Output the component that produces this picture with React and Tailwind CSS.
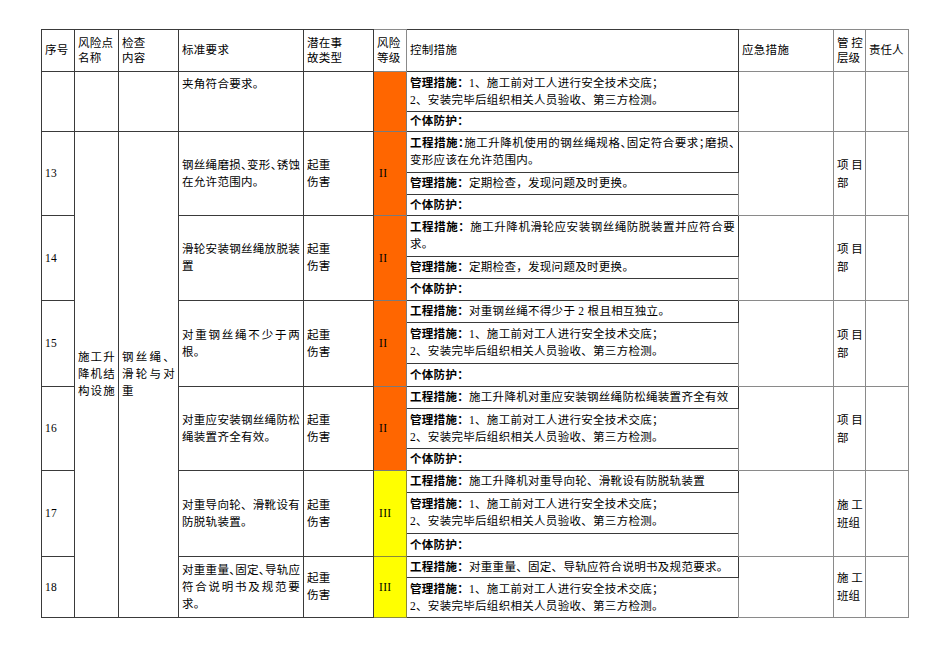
import clsx from 'clsx';

const MGMT = [
  { label: '管理措施：', text: '1、施工前对工人进行安全技术交底；' },
  { text: '2、安装完毕后组织相关人员验收、第三方检测。' },
];

const ROWS = [
  {
    no: '',
    std: [{ t: '夹角符合要求。' }],
    stdTop: true,
    hazard: false,
    level: '',
    color: 'orange',
    owner: null,
    ctrl: [
      { h: 40, lines: MGMT },
      { h: 20, lines: [{ label: '个体防护：' }] },
    ],
  },
  {
    no: '13',
    std: [{ t: '钢丝绳磨损、变形、锈蚀', j: true, halt: true }, { t: '在允许范围内。' }],
    hazard: true,
    level: 'II',
    color: 'orange',
    owner: ['项 目', '部'],
    ctrl: [
      {
        h: 41,
        lines: [
          { label: '工程措施：', text: '施工升降机使用的钢丝绳规格、固定符合要求；磨损、', j: true, halt: true },
          { text: '变形应该在允许范围内。' },
        ],
      },
      { h: 22, lines: [{ label: '管理措施：', text: '定期检查，发现问题及时更换。' }] },
      { h: 21, lines: [{ label: '个体防护：' }] },
    ],
  },
  {
    no: '14',
    std: [{ t: '滑轮安装钢丝绳放脱装', j: true }, { t: '置' }],
    hazard: true,
    level: 'II',
    color: 'orange',
    owner: ['项 目', '部'],
    ctrl: [
      {
        h: 41,
        lines: [
          { label: '工程措施：', text: '施工升降机滑轮应安装钢丝绳防脱装置并应符合要', j: true },
          { text: '求。' },
        ],
      },
      { h: 22, lines: [{ label: '管理措施：', text: '定期检查，发现问题及时更换。' }] },
      { h: 22, lines: [{ label: '个体防护：' }] },
    ],
  },
  {
    no: '15',
    std: [{ t: '对重钢丝绳不少于两', j: true }, { t: '根。' }],
    hazard: true,
    level: 'II',
    color: 'orange',
    owner: ['项 目', '部'],
    ctrl: [
      { h: 22, lines: [{ label: '工程措施：', text: '对重钢丝绳不得少于 2 根且相互独立。' }] },
      { h: 41, lines: MGMT },
      { h: 23, lines: [{ label: '个体防护：' }] },
    ],
  },
  {
    no: '16',
    std: [{ t: '对重应安装钢丝绳防松', j: true }, { t: '绳装置齐全有效。' }],
    hazard: true,
    level: 'II',
    color: 'orange',
    owner: ['项 目', '部'],
    ctrl: [
      { h: 22, lines: [{ label: '工程措施：', text: '施工升降机对重应安装钢丝绳防松绳装置齐全有效' }] },
      { h: 40, lines: MGMT },
      { h: 22, lines: [{ label: '个体防护：' }] },
    ],
  },
  {
    no: '17',
    std: [{ t: '对重导向轮、滑靴设有', j: true }, { t: '防脱轨装置。' }],
    hazard: true,
    level: 'III',
    color: 'yellow',
    owner: ['施 工', '班组'],
    ctrl: [
      { h: 22, lines: [{ label: '工程措施：', text: '施工升降机对重导向轮、滑靴设有防脱轨装置' }] },
      { h: 41, lines: MGMT },
      { h: 23, lines: [{ label: '个体防护：' }] },
    ],
  },
  {
    no: '18',
    std: [
      { t: '对重重量、固定、导轨应', j: true, halt: true },
      { t: '符合说明书及规范要', j: true },
      { t: '求。' },
    ],
    hazard: true,
    level: 'III',
    color: 'yellow',
    owner: ['施 工', '班组'],
    ctrl: [
      { h: 21, lines: [{ label: '工程措施：', text: '对重重量、固定、导轨应符合说明书及规范要求。' }] },
      { h: 40, lines: MGMT },
    ],
  },
];

const COLS = [33, 44, 60, 125, 70, 33, 332, 95, 32, 43];

const Line = ({ line }) => (
  <div
    className={clsx(
      'whitespace-nowrap',
      line.j && '[text-align-last:justify]',
      line.halt && "[font-feature-settings:'halt']"
    )}
  >
    {line.label && <span className="font-bold">{line.label}</span>}
    {line.text || line.t}
  </div>
);

const cell = 'border border-[#3a3a3a] px-[3px] align-middle';
const grayCell = 'border border-[#8a8a8a] px-[3px] align-middle';
const head = 'text-left font-normal whitespace-nowrap';

export default function App() {
  const spanRows = ROWS.slice(1).reduce((n, r) => n + r.ctrl.length, 0);

  return (
    <div
      className="min-h-[672px] bg-white pl-[41px] pt-[29px] text-[11.5px] leading-[17px] tracking-[0.3px] text-black"
      style={{ fontFamily: '"Liberation Serif", "Noto Sans CJK SC", serif' }}
    >
      <table className="table-fixed border-collapse" style={{ width: 867 }}>
        <colgroup>
          {COLS.map((w, i) => (
            <col key={i} style={{ width: w }} />
          ))}
        </colgroup>
        <thead>
          <tr className="h-[42px] leading-[15px]">
            <th className={clsx(cell, head)}>序号</th>
            <th className={clsx(cell, head)}>风险点<br />名称</th>
            <th className={clsx(cell, head)}>检查<br />内容</th>
            <th className={clsx(cell, head)}>标准要求</th>
            <th className={clsx(cell, head)}>潜在事<br />故类型</th>
            <th className={clsx(grayCell, head)}>风险<br />等级</th>
            <th className={clsx(cell, head)}>控制措施</th>
            <th className={clsx(grayCell, head)}>应急措施</th>
            <th className={clsx(grayCell, head, 'tracking-normal')}>
              <div className="whitespace-pre">管 控</div>
              <div>层级</div>
            </th>
            <th className={clsx(grayCell, head, 'tracking-normal')}>责任人</th>
          </tr>
        </thead>
        <tbody>
          {ROWS.map((row, ri) =>
            row.ctrl.map((sub, si) => (
              <tr key={`${ri}-${si}`} style={{ height: sub.h }}>
                {si === 0 && (
                  <>
                    <td rowSpan={row.ctrl.length} className={cell}>{row.no}</td>
                    {ri === 0 && (
                      <>
                        <td rowSpan={row.ctrl.length} className={cell} />
                        <td rowSpan={row.ctrl.length} className={cell} />
                      </>
                    )}
                    {ri === 1 && (
                      <>
                        <td rowSpan={spanRows} className={cell}>
                          <div className="[text-align-last:justify]">施工升</div>
                          <div className="[text-align-last:justify]">降机结</div>
                          <div className="[text-align-last:justify]">构设施</div>
                        </td>
                        <td rowSpan={spanRows} className={cell}>
                          <div className="[text-align-last:justify]">钢丝绳、</div>
                          <div className="[text-align-last:justify]">滑轮与对</div>
                          <div>重</div>
                        </td>
                      </>
                    )}
                    <td
                      rowSpan={row.ctrl.length}
                      className={clsx(cell, row.stdTop && '!align-top pt-[4px]')}
                    >
                      {row.std.map((l, i) => (
                        <Line key={i} line={l} />
                      ))}
                    </td>
                    <td rowSpan={row.ctrl.length} className={cell}>
                      {row.hazard && (
                        <>
                          <div>起重</div>
                          <div>伤害</div>
                        </>
                      )}
                    </td>
                    <td
                      rowSpan={row.ctrl.length}
                      className={clsx(
                        'border px-[5px] align-middle',
                        row.color === 'orange'
                          ? 'border-[#7a7a7a] bg-[#ff6600]'
                          : 'border-[#8a8a3a] bg-[#ffff00]'
                      )}
                    >
                      {row.level}
                    </td>
                  </>
                )}
                <td className={clsx(cell, 'py-0')}>
                  {sub.lines.map((l, i) => (
                    <Line key={i} line={l} />
                  ))}
                </td>
                {si === 0 && (
                  <>
                    <td rowSpan={row.ctrl.length} className={grayCell} />
                    <td rowSpan={row.ctrl.length} className={clsx(grayCell, 'leading-[18px] tracking-normal')}>
                      {row.owner && (
                        <>
                          <div className="whitespace-pre">{row.owner[0]}</div>
                          <div>{row.owner[1]}</div>
                        </>
                      )}
                    </td>
                    <td rowSpan={row.ctrl.length} className={grayCell} />
                  </>
                )}
              </tr>
            ))
          )}
        </tbody>
      </table>
    </div>
  );
}
